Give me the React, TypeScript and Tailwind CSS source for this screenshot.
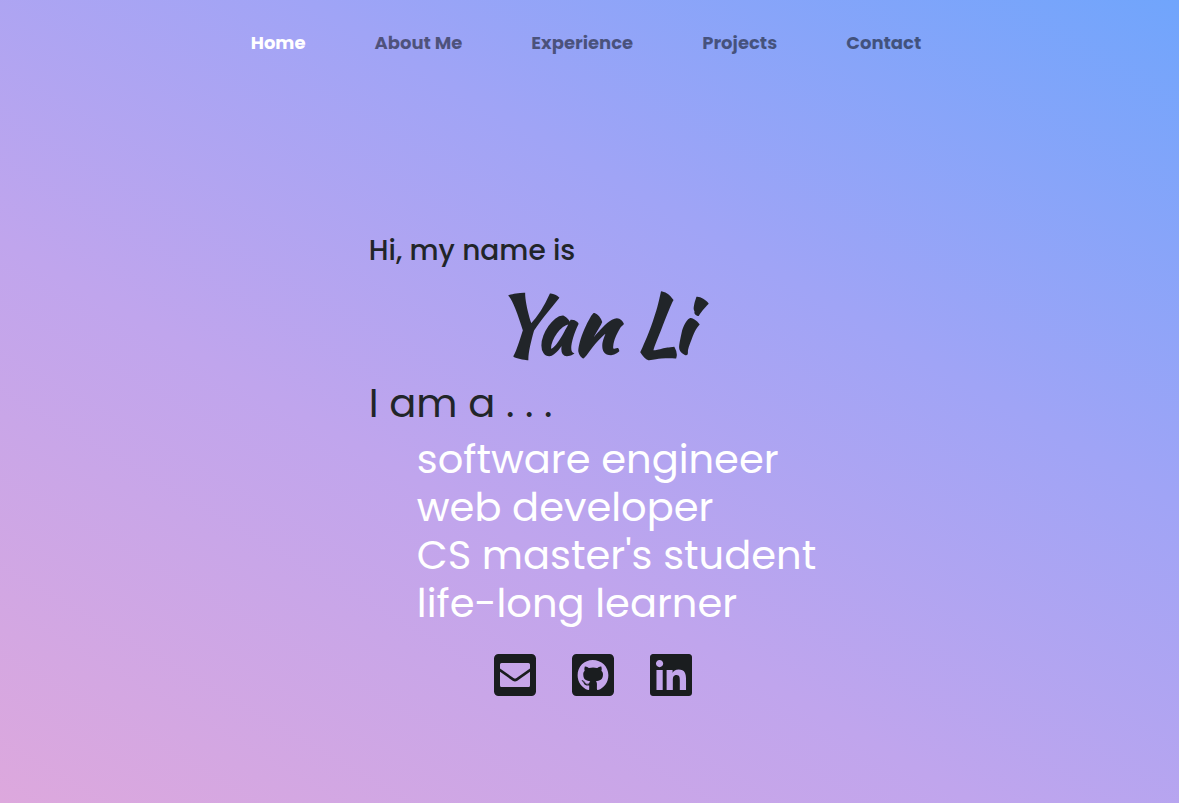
import type { SVGProps } from "react";
import { FaGithubSquare, FaLinkedin } from "react-icons/fa";

function MailSquare(props: SVGProps<SVGSVGElement>) {
  return (
    <svg viewBox="0 -3 42 48" fill="currentColor" aria-hidden="true" {...props}>
      <path
        fillRule="evenodd"
        d="M4.5 0h33A4.5 4.5 0 0 1 42 4.5v33a4.5 4.5 0 0 1-4.5 4.5h-33A4.5 4.5 0 0 1 0 37.5v-33A4.5 4.5 0 0 1 4.5 0ZM7.5 9A1.5 1.5 0 0 0 6 10.500v4L19.500 24q1.500 1 3 0L36 14.500v-4A1.500 1.500 0 0 0 34.500 9ZM6 17.700V31.500A1.500 1.500 0 0 0 7.500 33h27a1.500 1.500 0 0 0 1.500-1.500V17.700L23.300 26.800q-2.300 1.500-4.600 0Z"
      />
    </svg>
  );
}

const links = ["Home", "About Me", "Experience", "Projects", "Contact"];
const roles = ["software engineer", "web developer", "CS master's student", "life-long learner"];
const socials = [
  { label: "Email", href: "#email", Icon: MailSquare },
  { label: "GitHub", href: "#github", Icon: FaGithubSquare },
  { label: "LinkedIn", href: "#linkedin", Icon: FaLinkedin },
];

export default function App() {
  return (
    <div className="flex min-h-screen flex-col bg-[linear-gradient(30deg,#dda8dd_0%,#c0a5ed_38%,#a0a4f6_66%,#70a5fc_100%)] font-['Poppins','Inter',sans-serif] text-[#212529]">
      <nav aria-label="Main" className="flex justify-center gap-[69px] pt-[29px] pr-[7px] text-[18px] leading-7 font-bold">
        {links.map((link, i) => (
          <a
            key={link}
            href="#"
            aria-current={i === 0 ? "page" : undefined}
            className={i === 0 ? "whitespace-nowrap text-white" : "whitespace-nowrap text-black/50"}
          >
            {link}
          </a>
        ))}
      </nav>
      <main className="mx-auto flex flex-col pt-44 pl-1.5">
        <p className="text-[28px] leading-9 font-medium">Hi, my name is</p>
        <h1 className="pt-[10px] pb-[10px] text-center font-['Kaushan_Script','Lato',sans-serif] text-[80px] leading-[90px] font-bold">Yan Li</h1>
        <p className="text-[40px] leading-12">I am a . . .</p>
        <ul className="pt-2 pl-12 text-[40px] leading-12 text-white">
          {roles.map((role) => (
            <li key={role}>{role}</li>
          ))}
        </ul>
        <div className="flex justify-center gap-9 pt-6">
          {socials.map(({ label, href, Icon }) => (
            <a key={label} href={href} aria-label={label} className="flex h-12 w-[42px] items-center justify-center text-[#1a1d1f]">
              <Icon className="h-12 w-[42px]" />
            </a>
          ))}
        </div>
      </main>
    </div>
  );
}
